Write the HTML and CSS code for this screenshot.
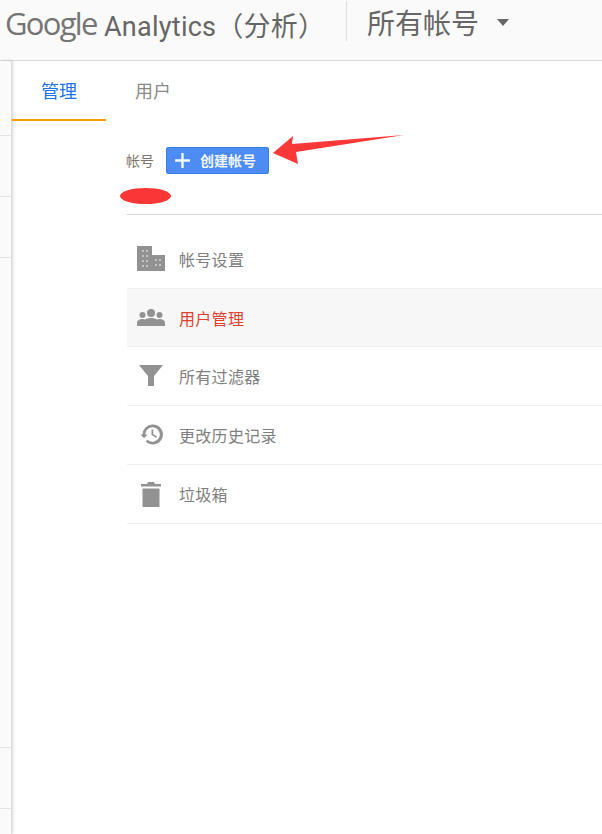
FILE: index.html
```html
<!DOCTYPE html>
<html lang="zh">
<head>
<meta charset="utf-8">
<title>Google Analytics</title>
<link rel="stylesheet" href="styles.css">
</head>
<body>
<header class="topbar">
  <span class="brand-google">Google</span>
  <span class="brand-product">Analytics（分析）</span>
  <span class="divider"></span>
  <span class="account-name">所有帐号</span>
  <span class="caret"></span>
</header>
<div class="shell">
  <aside class="rail">
    <div class="rail-cell rail-a"></div>
    <div class="rail-cell rail-b"></div>
    <div class="rail-cell rail-b"></div>
    <div class="rail-cell rail-c"></div>
    <div class="rail-cell rail-b"></div>
    <div class="rail-cell rail-d"></div>
  </aside>
  <main class="content">
    <nav class="tabs">
      <span class="tab tab-active">管理</span>
      <span class="tab">用户</span>
    </nav>
    <section class="panel">
      <div class="account-head">
        <div class="account-row">
          <span class="account-label">帐号</span>
          <button class="create-btn" type="button">
            <svg class="plus" viewBox="0 0 16 16" width="16" height="16"><path d="M6.700 0h2.600v6.700H16v2.600H9.300V16H6.700V9.300H0V6.700h6.700z"/></svg>
            <span>创建帐号</span>
          </button>
        </div>
        <div class="redaction"></div>
        <svg class="arrow" viewBox="0 0 132 34" width="132" height="34"><path d="M0 18 L20 1 L19 9 L131 0 L23 17 L25 29 Z"/></svg>
      </div>
      <ul class="menu">
        <li class="menu-item menu-first">
          <svg class="icon" viewBox="0 0 28 25" width="28" height="25"><path d="M0 0h15v9h13v16H0z"/><path class="icon-windows" d="M5 4v2h2V4zm4 0v2h2V4zM5 9v2h2V9zm4 0v2h2V9zM5 14v2h2v-2zm4 0v2h2v-2zM5 19v2h2v-2zm4 0v2h2v-2zm9-6v2h2v-2zm4 0v2h2v-2zm-4 5v2h2v-2zm4 0v2h2v-2z"/></svg>
          <span>帐号设置</span>
        </li>
        <li class="menu-item menu-selected">
          <svg class="icon" viewBox="0 0 28 24" width="28" height="24"><circle cx="14" cy="7" r="4"/><circle cx="5.500" cy="9" r="3"/><circle cx="22.500" cy="9" r="3"/><path d="M0 20v-3.500c0-2 3-3.500 5.500-3.500 1 0 2 .2 2.700.5 1.500-1 3.700-1.500 5.800-1.500s4.300.5 5.800 1.500c.7-.3 1.700-.5 2.700-.5C25 13 28 14.500 28 16.500V20z"/></svg>
          <span>用户管理</span>
        </li>
        <li class="menu-item">
          <svg class="icon" viewBox="0 0 28 24" width="28" height="24"><path d="M2 1h24L17 12v10h-6V12z"/></svg>
          <span>所有过滤器</span>
        </li>
        <li class="menu-item">
          <svg class="icon" viewBox="0 0 28 24" width="28" height="24"><path d="M15.500 1.500a10 10 0 0 0-10 10H3.500l3.500 3.700 3.500-3.700H8.200a7.300 7.300 0 1 1 2.200 5.200l-1.700 1.700a10 10 0 1 0 6.800-16.900zM14.500 6.500V12l4.700 2.800.9-1.400-3.800-2.200V6.500z"/></svg>
          <span>更改历史记录</span>
        </li>
        <li class="menu-item">
          <svg class="icon" viewBox="0 0 28 26" width="28" height="26"><path d="M4 3h6l1-2h6l1 2h6v2.500H4zM5.500 7.500h17V26h-17z"/></svg>
          <span>垃圾箱</span>
        </li>
      </ul>
    </section>
  </main>
</div>
</body>
</html>
```
FILE: styles.css
```css
* { box-sizing: border-box; }
html, body { margin: 0; padding: 0; }
body {
  width: 602px;
  height: 834px;
  overflow: hidden;
  background: #fff;
  font-family: "Noto Sans CJK SC", "Liberation Sans", sans-serif;
}
.topbar {
  height: 61px;
  display: flex;
  align-items: flex-start;
  background: #fafafa;
  border-bottom: 1px solid #dcdcdc;
  color: #666;
}
.brand-google {
  margin: 1px 0 0 5px;
  width: 99px;
  font: 31px/44px "Open Sans", "Liberation Sans", sans-serif;
  letter-spacing: -1.700px;
  color: #757575;
}
.brand-product {
  margin: 5px 0 0 0;
  width: 242px;
  font: 27px/44px "Roboto", "Noto Sans CJK SC", sans-serif;
  letter-spacing: .25px;
  color: #666;
}
.divider {
  width: 1px;
  height: 40px;
  margin-top: 1px;
  background: #ddd;
}
.account-name {
  margin: 0 0 0 20px;
  font-size: 28px;
  line-height: 44px;
  width: 130px;
  color: #666;
}
.caret {
  margin: 19px 0 0 0;
  width: 0;
  height: 0;
  border-left: 6.500px solid transparent;
  border-right: 6.500px solid transparent;
  border-top: 7px solid #666;
}
.shell { display: flex; height: 773px; }
.rail {
  width: 12px;
  flex: none;
  background: #fafafa;
  border-right: 1px solid #ddd;
  box-shadow: 1px 0 3px rgba(0,0,0,.16);
  display: flex;
  flex-direction: column;
}
.rail-cell { border-bottom: 1px solid #e3e3e3; width: 11px; }
.rail-a { height: 75px; }
.rail-b { height: 61px; }
.rail-c { height: 490px; }
.rail-d { flex: 1; border-bottom: 0; }
.content { flex: 1; min-width: 0; }
.tabs { display: flex; height: 60px; }
.tab {
  width: 94px;
  height: 60px;
  padding-top: 15px;
  text-align: center;
  font-size: 18px;
  line-height: 28px;
  color: #8a8a8a;
}
.tab-active {
  color: #1a73e8;
  border-bottom: 2px solid #f59b00;
}
.panel { padding: 0 0 0 115px; }
.account-head {
  position: relative;
  height: 94px;
  border-bottom: 1px solid #d9d9d9;
  padding-top: 26px;
}
.account-row { display: flex; align-items: center; margin-left: -1px; }
.account-label {
  width: 40px;
  font-size: 14px;
  line-height: 27px;
  color: #80756d;
}
.create-btn {
  display: flex;
  align-items: center;
  width: 103px;
  height: 27px;
  padding: 0 0 0 8px;
  border: 1px solid #3a7ee8;
  border-radius: 2px;
  background: #4d8cf4;
  color: #f1f6ff;
  font: 700 14px/25px "Noto Sans CJK SC", sans-serif;
}
.plus { width: 15px; height: 15px; fill: #f1f6ff; margin-right: 10px; }
.redaction {
  width: 51px;
  height: 16px;
  margin: 14px 0 0 -7px;
  border-radius: 50%;
  background: #fb3636;
}
.arrow {
  position: absolute;
  left: 146px;
  top: 14px;
  fill: #fb3838;
}
.menu { list-style: none; margin: 0; padding: 0; }
.menu-item {
  display: flex;
  align-items: center;
  height: 59px;
  border-bottom: 1px solid #efefef;
  font-size: 16px;
  letter-spacing: .3px;
  line-height: 24px;
  color: #808080;
}
.menu-first { height: 74px; padding-top: 14px; }
.menu-selected { height: 58px; background: #f7f7f7; color: #e2402f; }
.icon { fill: #929292; margin: 0 14px 0 10px; flex: none; }
.icon-windows { fill: #c4c4c4; }
```
